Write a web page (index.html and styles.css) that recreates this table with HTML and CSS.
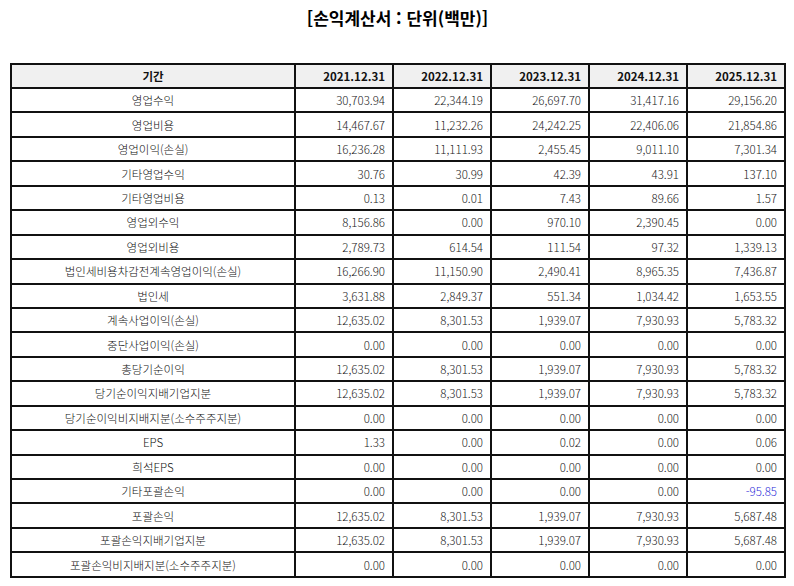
FILE: index.html
```html
<!DOCTYPE html>
<html lang="ko">
<head>
<meta charset="utf-8">
<link rel="stylesheet" href="styles.css">
</head>
<body>
<div class="page">
  <h1 class="title">[손익계산서 : 단위(백만)]</h1>
  <table class="fin">
    <colgroup>
      <col class="c-label"><col class="c-num"><col class="c-num"><col class="c-num"><col class="c-num"><col class="c-num">
    </colgroup>
    <thead>
      <tr><th>기간</th><th class="num">2021.12.31</th><th class="num">2022.12.31</th><th class="num">2023.12.31</th><th class="num">2024.12.31</th><th class="num">2025.12.31</th></tr>
    </thead>
    <tbody>
      <tr><td>영업수익</td><td class="num">30,703.94</td><td class="num">22,344.19</td><td class="num">26,697.70</td><td class="num">31,417.16</td><td class="num">29,156.20</td></tr>
      <tr><td>영업비용</td><td class="num">14,467.67</td><td class="num">11,232.26</td><td class="num">24,242.25</td><td class="num">22,406.06</td><td class="num">21,854.86</td></tr>
      <tr><td>영업이익(손실)</td><td class="num">16,236.28</td><td class="num">11,111.93</td><td class="num">2,455.45</td><td class="num">9,011.10</td><td class="num">7,301.34</td></tr>
      <tr><td>기타영업수익</td><td class="num">30.76</td><td class="num">30.99</td><td class="num">42.39</td><td class="num">43.91</td><td class="num">137.10</td></tr>
      <tr><td>기타영업비용</td><td class="num">0.13</td><td class="num">0.01</td><td class="num">7.43</td><td class="num">89.66</td><td class="num">1.57</td></tr>
      <tr><td>영업외수익</td><td class="num">8,156.86</td><td class="num">0.00</td><td class="num">970.10</td><td class="num">2,390.45</td><td class="num">0.00</td></tr>
      <tr><td>영업외비용</td><td class="num">2,789.73</td><td class="num">614.54</td><td class="num">111.54</td><td class="num">97.32</td><td class="num">1,339.13</td></tr>
      <tr><td>법인세비용차감전계속영업이익(손실)</td><td class="num">16,266.90</td><td class="num">11,150.90</td><td class="num">2,490.41</td><td class="num">8,965.35</td><td class="num">7,436.87</td></tr>
      <tr><td>법인세</td><td class="num">3,631.88</td><td class="num">2,849.37</td><td class="num">551.34</td><td class="num">1,034.42</td><td class="num">1,653.55</td></tr>
      <tr><td>계속사업이익(손실)</td><td class="num">12,635.02</td><td class="num">8,301.53</td><td class="num">1,939.07</td><td class="num">7,930.93</td><td class="num">5,783.32</td></tr>
      <tr><td>중단사업이익(손실)</td><td class="num">0.00</td><td class="num">0.00</td><td class="num">0.00</td><td class="num">0.00</td><td class="num">0.00</td></tr>
      <tr><td>총당기순이익</td><td class="num">12,635.02</td><td class="num">8,301.53</td><td class="num">1,939.07</td><td class="num">7,930.93</td><td class="num">5,783.32</td></tr>
      <tr><td>당기순이익지배기업지분</td><td class="num">12,635.02</td><td class="num">8,301.53</td><td class="num">1,939.07</td><td class="num">7,930.93</td><td class="num">5,783.32</td></tr>
      <tr><td>당기순이익비지배지분(소수주주지분)</td><td class="num">0.00</td><td class="num">0.00</td><td class="num">0.00</td><td class="num">0.00</td><td class="num">0.00</td></tr>
      <tr><td>EPS</td><td class="num">1.33</td><td class="num">0.00</td><td class="num">0.02</td><td class="num">0.00</td><td class="num">0.06</td></tr>
      <tr><td>희석EPS</td><td class="num">0.00</td><td class="num">0.00</td><td class="num">0.00</td><td class="num">0.00</td><td class="num">0.00</td></tr>
      <tr><td>기타포괄손익</td><td class="num">0.00</td><td class="num">0.00</td><td class="num">0.00</td><td class="num">0.00</td><td class="num neg">-95.85</td></tr>
      <tr><td>포괄손익</td><td class="num">12,635.02</td><td class="num">8,301.53</td><td class="num">1,939.07</td><td class="num">7,930.93</td><td class="num">5,687.48</td></tr>
      <tr><td>포괄손익지배기업지분</td><td class="num">12,635.02</td><td class="num">8,301.53</td><td class="num">1,939.07</td><td class="num">7,930.93</td><td class="num">5,687.48</td></tr>
      <tr><td>포괄손익비지배지분(소수주주지분)</td><td class="num">0.00</td><td class="num">0.00</td><td class="num">0.00</td><td class="num">0.00</td><td class="num">0.00</td></tr>
    </tbody>
  </table>
</div>
</body>
</html>
```

FILE: styles.css
```css
html, body {
  margin: 0;
  padding: 0;
  background: #ffffff;
}
body {
  font-family: "Noto Sans CJK KR", "Noto Sans", sans-serif;
  color: #111111;
}
.page {
  padding: 4px 9px 0 10px;
}
.title {
  margin: 0;
  height: 59px;
  font-size: 17px;
  font-weight: bold;
  text-align: center;
  line-height: 28px;
  color: #000000;
}
.fin {
  width: 775px;
  border-collapse: collapse;
  table-layout: fixed;
  font-size: 11.5px;
}
.c-label { width: 284px; }
.c-num { width: 98px; }
.fin th, .fin td {
  border: 2px solid #111111;
  height: 22.45px;
  padding: 0 7px;
  text-align: center;
  white-space: nowrap;
  line-height: 14px;
}
.fin th {
  background: #f0f0f0;
  font-weight: bold;
  height: 22px;
}
.fin .num {
  text-align: right;
}
.fin td {
  font-weight: 300;
}
.fin td.num {
  color: #222222;
}
.fin td.neg {
  color: #2a2ad8;
}
```
